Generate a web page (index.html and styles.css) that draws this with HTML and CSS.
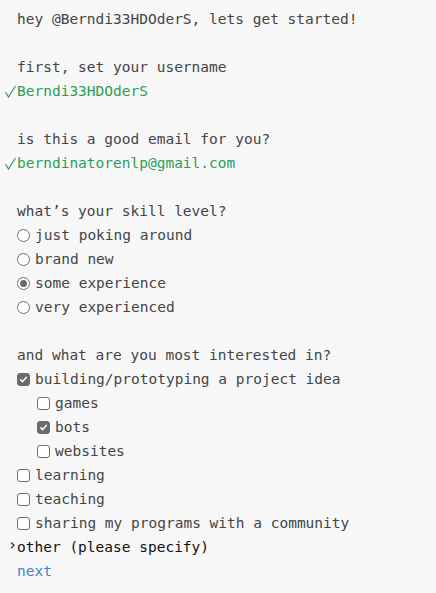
FILE: index.html
```html
<!DOCTYPE html>
<html>
<head>
<meta charset="utf-8">
<link rel="stylesheet" href="styles.css">
</head>
<body>
<div class="term">
  <div class="line">hey @Berndi33HDOderS, lets get started!</div>
  <div class="line"></div>
  <div class="line">first, set your username</div>
  <div class="line ok"><svg class="mark" viewBox="0 0 12 24"><path d="M0.5 18 L3.5 23 L10.5 12" fill="none" stroke="currentColor" stroke-width="1.2"/></svg>Berndi33HDOderS</div>
  <div class="line"></div>
  <div class="line">is this a good email for you?</div>
  <div class="line ok"><svg class="mark" viewBox="0 0 12 24"><path d="M0.5 18 L3.5 23 L10.5 12" fill="none" stroke="currentColor" stroke-width="1.2"/></svg>berndinatorenlp@gmail.com</div>
  <div class="line"></div>
  <div class="line">what’s your skill level?</div>
  <div class="line opt"><span class="radio"></span>just poking around</div>
  <div class="line opt"><span class="radio"></span>brand new</div>
  <div class="line opt"><span class="radio on"></span>some experience</div>
  <div class="line opt"><span class="radio"></span>very experienced</div>
  <div class="line"></div>
  <div class="line">and what are you most interested in?</div>
  <div class="line opt"><span class="box on"><svg viewBox="0 0 13 13"><path d="M3.2 6.8 L5.4 9 L9.8 4" fill="none" stroke="#fff" stroke-width="1.8" stroke-linecap="round" stroke-linejoin="round"/></svg></span>building/prototyping a project idea</div>
  <div class="line opt sub"><span class="box"></span>games</div>
  <div class="line opt sub"><span class="box on"><svg viewBox="0 0 13 13"><path d="M3.2 6.8 L5.4 9 L9.8 4" fill="none" stroke="#fff" stroke-width="1.8" stroke-linecap="round" stroke-linejoin="round"/></svg></span>bots</div>
  <div class="line opt sub"><span class="box"></span>websites</div>
  <div class="line opt"><span class="box"></span>learning</div>
  <div class="line opt"><span class="box"></span>teaching</div>
  <div class="line opt"><span class="box"></span>sharing my programs with a community</div>
  <div class="line cur"><span class="chev">›</span>other (please specify)</div>
  <div class="line link">next</div>
</div>
</body>
</html>
```
FILE: styles.css
```css
html, body {
  margin: 0;
  padding: 0;
  background: #f7f7f7;
}
.term {
  padding: 7px 0 0 17px;
  font-family: "DejaVu Sans Mono", "Liberation Mono", monospace;
  font-size: 14.5px;
  color: #454545;
}
.line {
  height: 24px;
  line-height: 24px;
  display: flex;
  align-items: center;
  white-space: pre;
}
.mark {
  width: 12px;
  height: 24px;
  margin-left: -12px;
  flex: none;
  position: relative;
  top: -5px;
}
.ok {
  color: #2e9c56;
}
.chev {
  font-size: 15px;
  width: 9px;
  margin-left: -9px;
  color: #111;
  position: relative;
  top: -2px;
}
.cur {
  color: #111;
}
.link {
  color: #3f82c9;
}
.radio {
  width: 11px;
  height: 11px;
  border: 1px solid #6f6f6f;
  border-radius: 50%;
  background: #fff;
  margin-right: 5px;
  display: flex;
  align-items: center;
  justify-content: center;
  flex: none;
}
.radio.on::after {
  content: "";
  width: 7px;
  height: 7px;
  border-radius: 50%;
  background: #6b6b6b;
}
.box {
  width: 11px;
  height: 11px;
  border: 1px solid #6f6f6f;
  border-radius: 3px;
  background: #fff;
  margin-right: 5px;
  flex: none;
  display: flex;
}
.box.on {
  background: #6b6b6b;
  border-color: #6b6b6b;
}
.box svg {
  width: 11px;
  height: 11px;
}
.sub {
  padding-left: 20px;
}
```
